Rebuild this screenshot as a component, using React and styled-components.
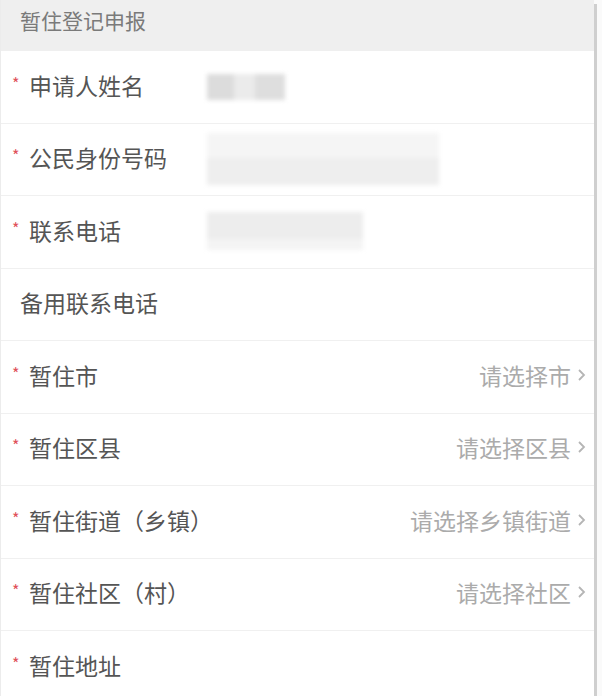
import React from "react";
import styled, { createGlobalStyle } from "styled-components";

const Global = createGlobalStyle`
  html, body { margin: 0; padding: 0; background: #fff; }
  body { font-family: "Noto Sans CJK SC", "Noto Sans", sans-serif; }
`;

const Page = styled.div`
  display: flex;
  width: 602px;
  height: 696px;
  overflow: hidden;
  background: #fff;
`;

const Form = styled.div`
  flex: 1;
  min-width: 0;
  overflow: hidden;
  display: flex;
  flex-direction: column;
  border-left: 1px solid #ececec;
`;

const Track = styled.div`
  width: 8px;
  flex: none;
  display: flex;
  padding-top: 4px;
  box-sizing: border-box;
  background: #fafafa;
`;

const Thumb = styled.div`
  width: 3px;
  height: 100%;
  background: #cfcfcf;
`;

const Header = styled.div`
  height: 51px;
  flex: none;
  display: flex;
  align-items: center;
  padding-left: 19px;
  padding-bottom: 12px;
  box-sizing: border-box;
  background: #efefef;
  color: #7a7a7a;
  font-size: 21px;
`;

const Row = styled.div`
  height: 72.5px;
  flex: none;
  box-sizing: border-box;
  display: flex;
  align-items: center;
  border-bottom: 1px solid #f0f0f0;
  padding-right: 8px;
`;

const Mark = styled.span`
  width: 28px;
  flex: none;
  align-self: center;
  padding-left: 11px;
  box-sizing: border-box;
  color: #e0505a;
  font-size: 16px;
  line-height: 1;
  margin-top: -8px;
`;

const Label = styled.span`
  width: ${(p) => (p.$wide ? "auto" : "178px")};
  flex: none;
  color: #555;
  font-size: 23px;
  margin-left: ${(p) => (p.$plain ? "-9px" : "0")};
  margin-top: -4px;
`;

const Blur = styled.div`
  width: ${(p) => p.$w}px;
  height: ${(p) => p.$h}px;
  margin-top: ${(p) => p.$dy || 0}px;
  background: ${(p) => p.$bg};
  filter: blur(2px);
  flex: none;
`;

const Picker = styled.div`
  margin-left: auto;
  display: flex;
  align-items: center;
  gap: 6px;
  color: #ababab;
  font-size: 23px;
  margin-top: -4px;
`;

const Chevron = () => (
  <svg width="9" height="14" viewBox="0 0 9 14">
    <path d="M2 2l5 5-5 5" fill="none" stroke="#b5b5b5" strokeWidth="1.8" />
  </svg>
);

const rows = [
  { label: "申请人姓名", req: true, blur: { w: 78, h: 26, bg: "linear-gradient(90deg,#dcdcdc 0 35%,#ebebeb 35% 62%,#dedede 62%)" } },
  { label: "公民身份号码", req: true, blur: { w: 232, h: 52, bg: "linear-gradient(180deg,#f5f5f5 0 48%,#eeeeee 48%)" } },
  { label: "联系电话", req: true, blur: { w: 156, h: 38, dy: -2, bg: "linear-gradient(180deg,#ededed 0 70%,#f4f4f4 70%)" } },
  { label: "备用联系电话", req: false },
  { label: "暂住市", req: true, pick: "请选择市" },
  { label: "暂住区县", req: true, pick: "请选择区县" },
  { label: "暂住街道（乡镇）", req: true, pick: "请选择乡镇街道" },
  { label: "暂住社区（村）", req: true, pick: "请选择社区" },
  { label: "暂住地址", req: true },
];

export default function App() {
  return (
    <>
      <Global />
      <Page>
        <Form>
          <Header>暂住登记申报</Header>
          {rows.map((r) => (
            <Row key={r.label}>
              <Mark>{r.req ? "*" : ""}</Mark>
              <Label $plain={!r.req} $wide={!!r.pick}>{r.label}</Label>
              {r.blur && <Blur $w={r.blur.w} $h={r.blur.h} $dy={r.blur.dy} $bg={r.blur.bg} />}
              {r.pick && (
                <Picker>
                  {r.pick}
                  <Chevron />
                </Picker>
              )}
            </Row>
          ))}
        </Form>
        <Track>
          <Thumb />
        </Track>
      </Page>
    </>
  );
}
